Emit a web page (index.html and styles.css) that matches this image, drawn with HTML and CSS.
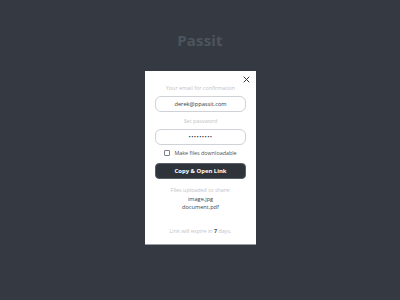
FILE: index.html
```html
<!DOCTYPE html>
<html>
<head>
<meta charset="utf-8">
<link rel="stylesheet" href="styles.css">
</head>
<body>
<div class="page">
  <h1 class="brand">Passit</h1>
  <div class="modal">
    <button class="close" aria-label="Close">
      <svg width="7" height="7" viewBox="0 0 7 7"><path d="M0.7 0.7L6.3 6.3M6.3 0.7L0.7 6.3" stroke="#2f343b" stroke-width="1" fill="none"/></svg>
    </button>
    <div class="label first">Your email for confirmation</div>
    <div class="input">derek@ppassit.com</div>
    <div class="label">Set password</div>
    <div class="input dots">&#8226;&#8226;&#8226;&#8226;&#8226;&#8226;&#8226;&#8226;&#8226;</div>
    <label class="check"><span class="box"></span><span>Make files downloadable</span></label>
    <div class="btn">Copy &amp; Open Link</div>
    <div class="files">
      <div class="muted">Files uploaded to share:</div>
      <div class="file">image.jpg</div>
      <div class="file">document.pdf</div>
    </div>
    <div class="expire">Link will expire in <b>7</b> days.</div>
  </div>
</div>
</body>
</html>
```
FILE: styles.css
```css
html, body {
  margin: 0;
  padding: 0;
  background: #353a42;
  font-family: "Open Sans", "Noto Sans", sans-serif;
}
.page {
  display: flex;
  flex-direction: column;
  align-items: center;
  padding-top: 30px;
  height: 300px;
  box-sizing: border-box;
}
.brand {
  margin: 0;
  font-size: 15px;
  line-height: 20px;
  font-weight: 700;
  color: #4d545d;
  letter-spacing: 0.2px;
}
.modal {
  position: relative;
  margin-top: 21px;
  margin-left: 1px;
  width: 111px;
  height: 173px;
  box-sizing: border-box;
  background: #fff;
  padding: 13px 10px 0 10px;
  display: flex;
  flex-direction: column;
  align-items: stretch;
  box-shadow: 0 1px 0 #9a9ea4;
}
.close {
  position: absolute;
  top: 4px;
  right: 5px;
  width: 9px;
  height: 9px;
  padding: 1px;
  border: 0;
  background: none;
  display: flex;
  align-items: center;
  justify-content: center;
}
.label {
  font-size: 5.4px;
  line-height: 9px;
  color: #c0c3c8;
  text-align: center;
  margin-top: 5px;
}
.label.first { margin-top: 0; }
.input {
  margin-top: 3px;
  height: 16px;
  box-sizing: border-box;
  border: 1px solid #cfd2d6;
  border-radius: 6px;
  font-size: 5.7px;
  line-height: 14px;
  color: #353a41;
  text-align: center;
}
.input.dots {
  font-size: 6px;
  letter-spacing: 0.4px;
  color: #2f343b;
}
.check {
  margin-top: 4px;
  display: flex;
  align-items: center;
  justify-content: center;
  gap: 4px;
  height: 8px;
  font-size: 5.4px;
  color: #4a5058;
}
.box {
  width: 4px;
  height: 4px;
  border: 1px solid #7b8087;
  border-radius: 1px;
}
.btn {
  margin-top: 6px;
  height: 16px;
  box-sizing: border-box;
  background: #2f343b;
  border: 1px solid #5b6068;
  border-radius: 4px;
  color: #fff;
  font-size: 5.9px;
  font-weight: 700;
  line-height: 14px;
  text-align: center;
}
.files {
  margin-top: 7px;
  text-align: center;
  font-size: 5.4px;
  line-height: 8.5px;
}
.muted { color: #c0c3c8; }
.file { color: #3a3f46; font-size: 5.6px; }
.expire {
  margin-top: 15px;
  text-align: center;
  font-size: 5.4px;
  line-height: 9px;
  color: #c0c3c8;
}
.expire b { color: #4a5058; }
```
